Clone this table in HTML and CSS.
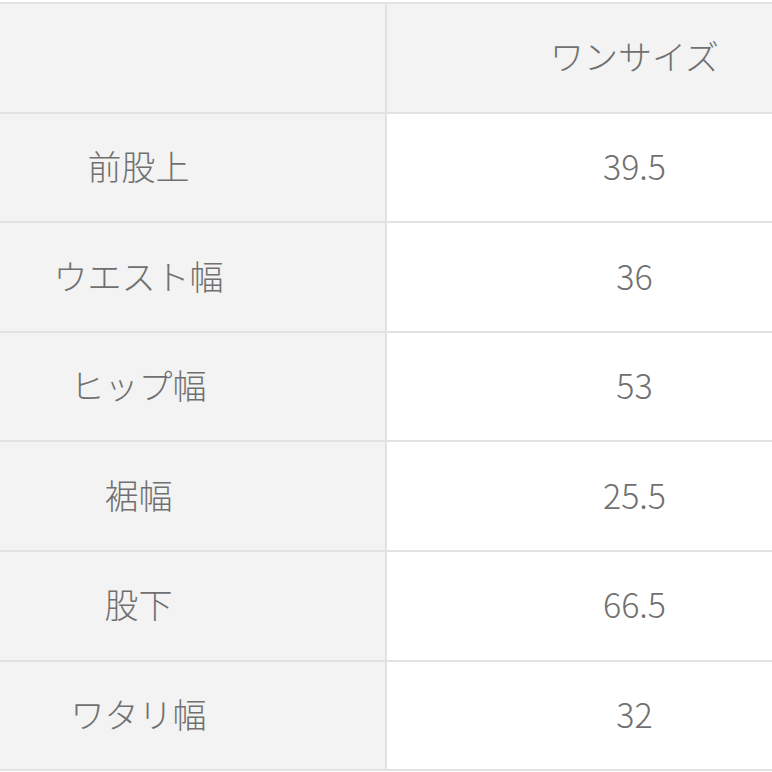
FILE: index.html
```html
<!DOCTYPE html>
<html lang="ja">
<head>
<meta charset="utf-8">
<link rel="stylesheet" href="styles.css">
</head>
<body>
<div class="wrap">
<table class="size-table">
  <tr class="head"><th class="label"></th><th class="value">ワンサイズ</th></tr>
  <tr><th class="label">前股上</th><td class="value">39.5</td></tr>
  <tr><th class="label">ウエスト幅</th><td class="value">36</td></tr>
  <tr><th class="label">ヒップ幅</th><td class="value">53</td></tr>
  <tr><th class="label">裾幅</th><td class="value">25.5</td></tr>
  <tr><th class="label">股下</th><td class="value">66.5</td></tr>
  <tr><th class="label">ワタリ幅</th><td class="value">32</td></tr>
</table>
</div>
</body>
</html>
```
FILE: styles.css
```css
html, body {
  margin: 0;
  padding: 0;
  background: #ffffff;
  overflow: hidden;
}
.wrap {
  width: 772px;
  height: 772px;
  overflow: hidden;
  padding-top: 2px;
  box-sizing: border-box;
}
.size-table {
  margin-left: -110px;
  width: 994px;
  border-collapse: collapse;
  table-layout: fixed;
  font-family: "Noto Sans CJK JP", "Noto Sans", sans-serif;
  font-size: 34px;
  font-weight: 300;
  color: #707070;
  line-height: 1.2;
}
.size-table th,
.size-table td {
  border: 2px solid #e2e2e2;
  height: 105.6px;
  padding: 0 0 2px 0;
  text-align: center;
  vertical-align: middle;
  font-weight: 300;
}
.size-table .label {
  width: 493px;
  background: #f3f3f3;
}
.size-table .value {
  background: #ffffff;
}
.size-table .head .value {
  background: #f3f3f3;
}
```
